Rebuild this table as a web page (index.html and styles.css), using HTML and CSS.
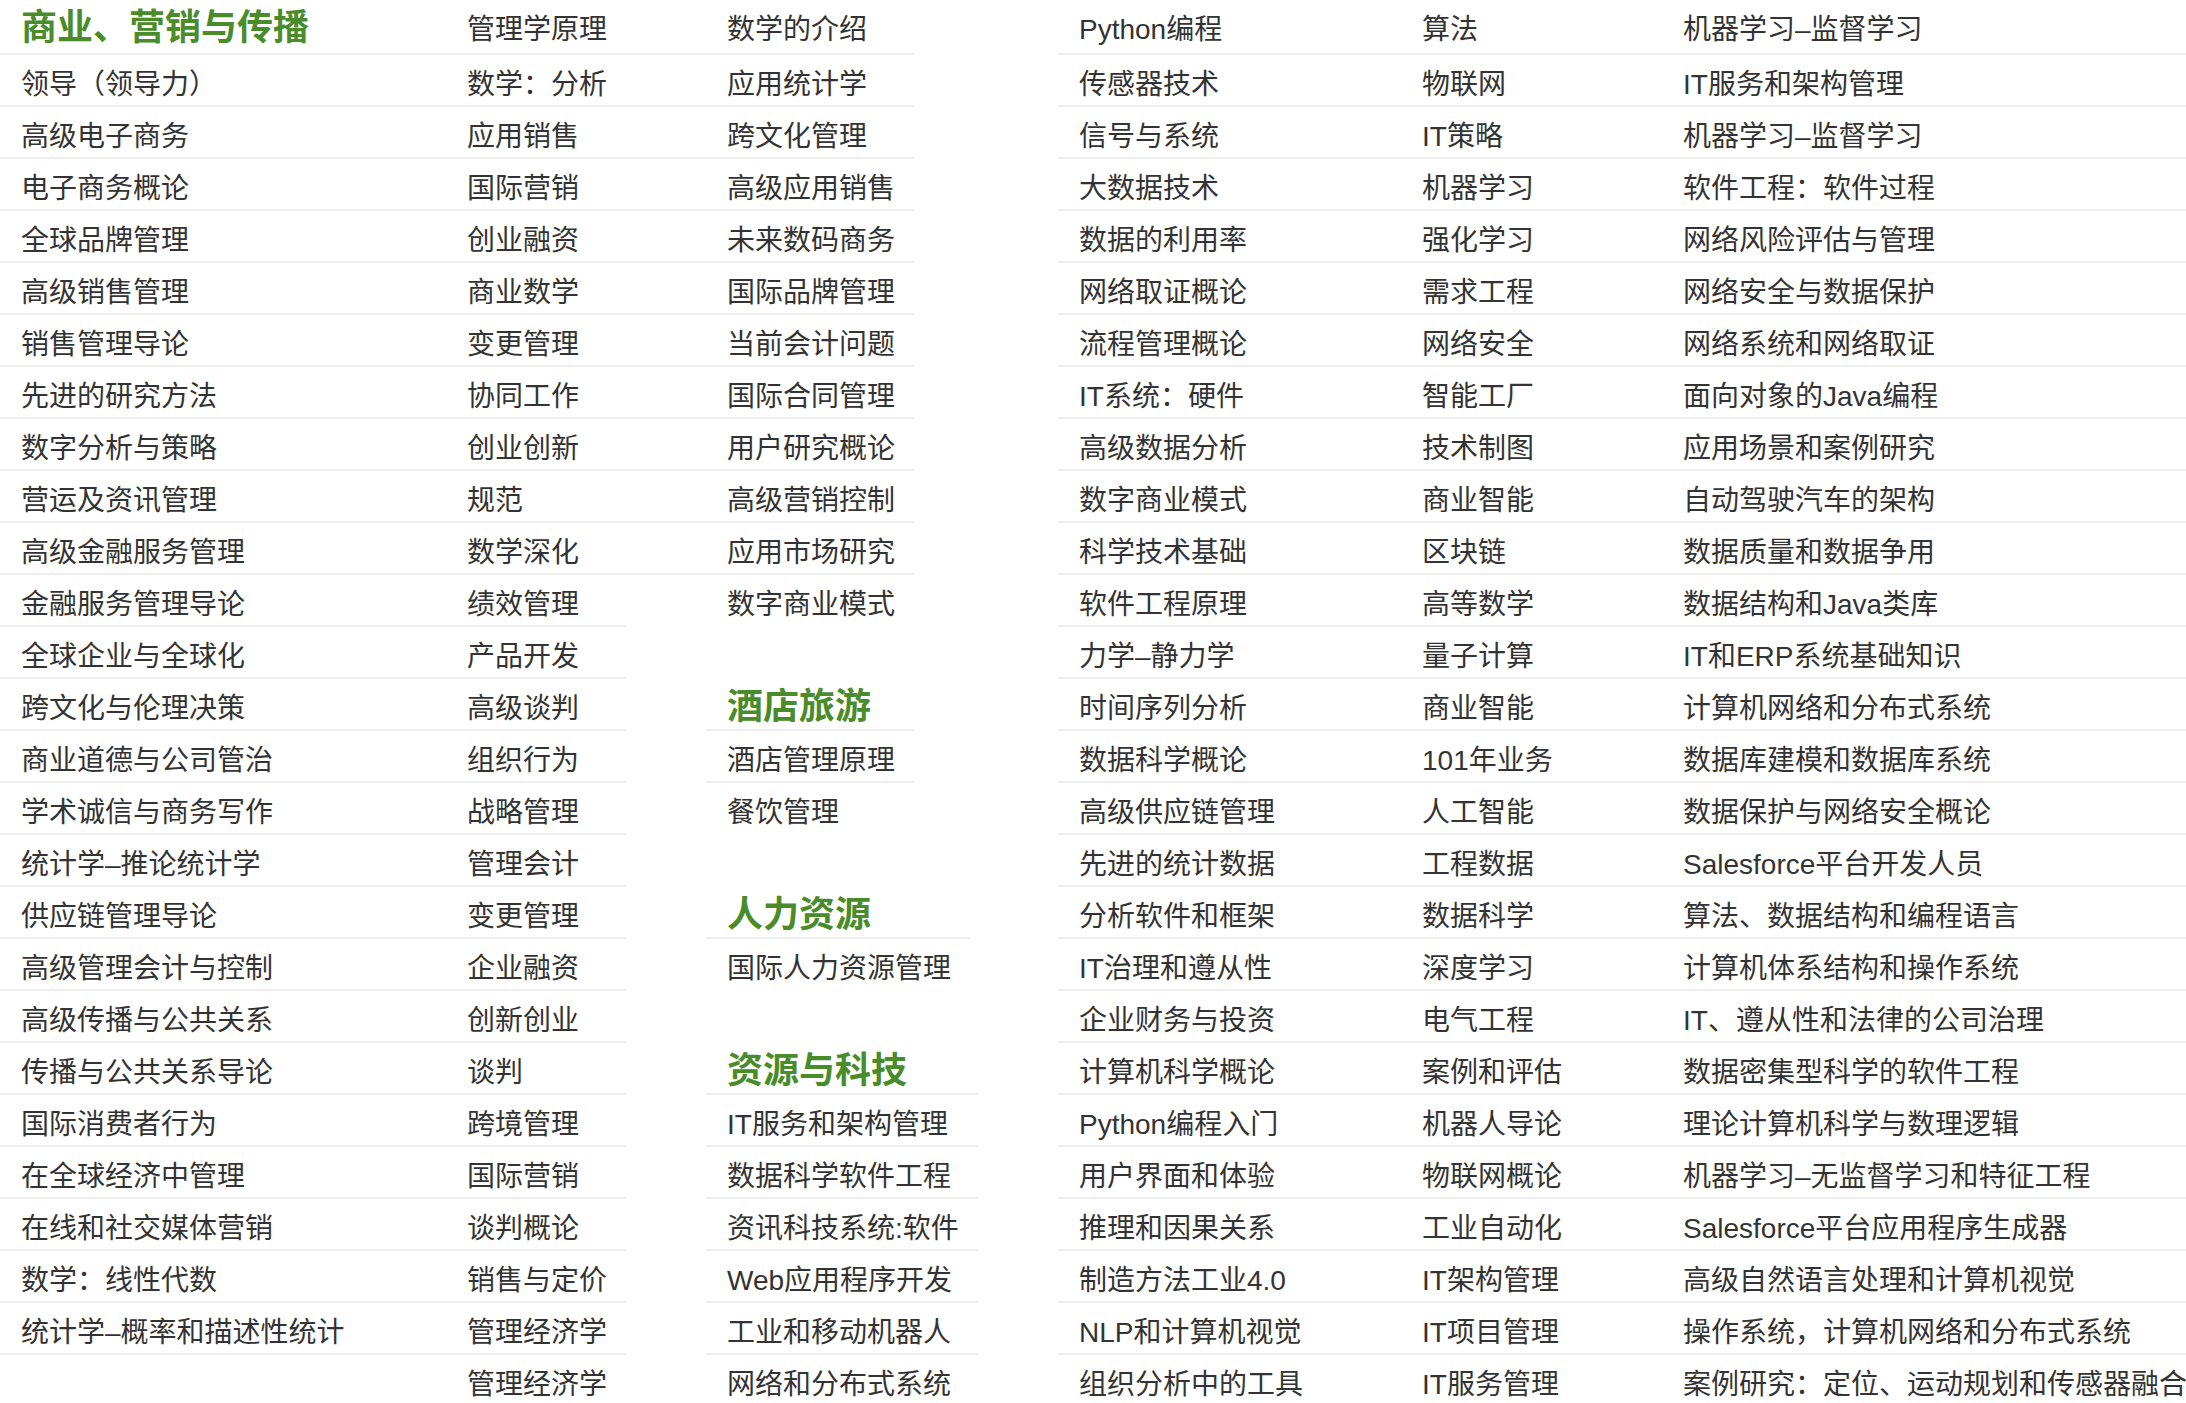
FILE: index.html
```html
<!DOCTYPE html>
<html lang="zh-CN">
<head>
<meta charset="utf-8">
<title>课程列表</title>
<link rel="stylesheet" href="styles.css">
</head>
<body>
<div class="page">
  <div class="left">
    <div class="grid2">
      <div class="c h">商业、营销与传播</div><div class="c">管理学原理</div>
      <div class="c">领导（领导力）</div><div class="c">数学：分析</div>
      <div class="c">高级电子商务</div><div class="c">应用销售</div>
      <div class="c">电子商务概论</div><div class="c">国际营销</div>
      <div class="c">全球品牌管理</div><div class="c">创业融资</div>
      <div class="c">高级销售管理</div><div class="c">商业数学</div>
      <div class="c">销售管理导论</div><div class="c">变更管理</div>
      <div class="c">先进的研究方法</div><div class="c">协同工作</div>
      <div class="c">数字分析与策略</div><div class="c">创业创新</div>
      <div class="c">营运及资讯管理</div><div class="c">规范</div>
      <div class="c">高级金融服务管理</div><div class="c">数学深化</div>
      <div class="c">金融服务管理导论</div><div class="c">绩效管理</div>
      <div class="c">全球企业与全球化</div><div class="c">产品开发</div>
      <div class="c">跨文化与伦理决策</div><div class="c">高级谈判</div>
      <div class="c">商业道德与公司管治</div><div class="c">组织行为</div>
      <div class="c">学术诚信与商务写作</div><div class="c">战略管理</div>
      <div class="c">统计学–推论统计学</div><div class="c">管理会计</div>
      <div class="c">供应链管理导论</div><div class="c">变更管理</div>
      <div class="c">高级管理会计与控制</div><div class="c">企业融资</div>
      <div class="c">高级传播与公共关系</div><div class="c">创新创业</div>
      <div class="c">传播与公共关系导论</div><div class="c">谈判</div>
      <div class="c">国际消费者行为</div><div class="c">跨境管理</div>
      <div class="c">在全球经济中管理</div><div class="c">国际营销</div>
      <div class="c">在线和社交媒体营销</div><div class="c">谈判概论</div>
      <div class="c">数学：线性代数</div><div class="c">销售与定价</div>
      <div class="c">统计学–概率和描述性统计</div><div class="c">管理经济学</div>
      <div class="c"></div><div class="c">管理经济学</div>
    </div>
    <div class="col3">
      <div class="list upper">
        <div class="c">数学的介绍</div>
        <div class="c">应用统计学</div>
        <div class="c">跨文化管理</div>
        <div class="c">高级应用销售</div>
        <div class="c">未来数码商务</div>
        <div class="c">国际品牌管理</div>
        <div class="c">当前会计问题</div>
        <div class="c">国际合同管理</div>
        <div class="c">用户研究概论</div>
        <div class="c">高级营销控制</div>
        <div class="c">应用市场研究</div>
        <div class="c">数字商业模式</div>
      </div>
      <div class="list section">
        <div class="c h">酒店旅游</div>
        <div class="c">酒店管理原理</div>
        <div class="c">餐饮管理</div>
      </div>
      <div class="list section">
        <div class="c h">人力资源</div>
        <div class="c">国际人力资源管理</div>
      </div>
      <div class="list section">
        <div class="c h">资源与科技</div>
        <div class="c">IT服务和架构管理</div>
        <div class="c">数据科学软件工程</div>
        <div class="c">资讯科技系统:软件</div>
        <div class="c">Web应用程序开发</div>
        <div class="c">工业和移动机器人</div>
        <div class="c">网络和分布式系统</div>
      </div>
    </div>
  </div>
  <div class="grid3">
    <div class="c">Python编程</div><div class="c">算法</div><div class="c">机器学习–监督学习</div>
    <div class="c">传感器技术</div><div class="c">物联网</div><div class="c">IT服务和架构管理</div>
    <div class="c">信号与系统</div><div class="c">IT策略</div><div class="c">机器学习–监督学习</div>
    <div class="c">大数据技术</div><div class="c">机器学习</div><div class="c">软件工程：软件过程</div>
    <div class="c">数据的利用率</div><div class="c">强化学习</div><div class="c">网络风险评估与管理</div>
    <div class="c">网络取证概论</div><div class="c">需求工程</div><div class="c">网络安全与数据保护</div>
    <div class="c">流程管理概论</div><div class="c">网络安全</div><div class="c">网络系统和网络取证</div>
    <div class="c">IT系统：硬件</div><div class="c">智能工厂</div><div class="c">面向对象的Java编程</div>
    <div class="c">高级数据分析</div><div class="c">技术制图</div><div class="c">应用场景和案例研究</div>
    <div class="c">数字商业模式</div><div class="c">商业智能</div><div class="c">自动驾驶汽车的架构</div>
    <div class="c">科学技术基础</div><div class="c">区块链</div><div class="c">数据质量和数据争用</div>
    <div class="c">软件工程原理</div><div class="c">高等数学</div><div class="c">数据结构和Java类库</div>
    <div class="c">力学–静力学</div><div class="c">量子计算</div><div class="c">IT和ERP系统基础知识</div>
    <div class="c">时间序列分析</div><div class="c">商业智能</div><div class="c">计算机网络和分布式系统</div>
    <div class="c">数据科学概论</div><div class="c">101年业务</div><div class="c">数据库建模和数据库系统</div>
    <div class="c">高级供应链管理</div><div class="c">人工智能</div><div class="c">数据保护与网络安全概论</div>
    <div class="c">先进的统计数据</div><div class="c">工程数据</div><div class="c">Salesforce平台开发人员</div>
    <div class="c">分析软件和框架</div><div class="c">数据科学</div><div class="c">算法、数据结构和编程语言</div>
    <div class="c">IT治理和遵从性</div><div class="c">深度学习</div><div class="c">计算机体系结构和操作系统</div>
    <div class="c">企业财务与投资</div><div class="c">电气工程</div><div class="c">IT、遵从性和法律的公司治理</div>
    <div class="c">计算机科学概论</div><div class="c">案例和评估</div><div class="c">数据密集型科学的软件工程</div>
    <div class="c">Python编程入门</div><div class="c">机器人导论</div><div class="c">理论计算机科学与数理逻辑</div>
    <div class="c">用户界面和体验</div><div class="c">物联网概论</div><div class="c">机器学习–无监督学习和特征工程</div>
    <div class="c">推理和因果关系</div><div class="c">工业自动化</div><div class="c">Salesforce平台应用程序生成器</div>
    <div class="c">制造方法工业4.0</div><div class="c">IT架构管理</div><div class="c">高级自然语言处理和计算机视觉</div>
    <div class="c">NLP和计算机视觉</div><div class="c">IT项目管理</div><div class="c">操作系统，计算机网络和分布式系统</div>
    <div class="c">组织分析中的工具</div><div class="c">IT服务管理</div><div class="c">案例研究：定位、运动规划和传感器融合</div>
  </div>
</div>
</body>
</html>
```

FILE: styles.css
```css
html, body {
  margin: 0;
  padding: 0;
  overflow: hidden;
  background: #ffffff;
}

body {
  font-family: "Liberation Sans", "Noto Sans CJK SC", sans-serif;
  font-size: 28px;
  color: #333333;
}

.page {
  display: flex;
  align-items: flex-start;
}

.left {
  display: flex;
  align-items: flex-start;
  width: 1058px;
  flex: none;
}

.c {
  box-sizing: border-box;
  height: 52px;
  padding: 9px 19px 0 21px;
  line-height: 41px;
  white-space: nowrap;
  border-bottom: 2px solid #eeeeee;
}

.h {
  font-size: 36px;
  font-weight: 700;
  color: #4a8c2a;
  padding-top: 6px;
  line-height: 44px;
}

/* left: columns 1 and 2 */
.grid2 {
  display: grid;
  grid-template-columns: 446px 180px;
  flex: none;
}
.grid2 > .c:nth-child(-n+2) { height: 55px; }
.grid2 > .c:nth-last-child(-n+2) { border-bottom-color: transparent; }

/* left: column 3 */
.col3 {
  display: flex;
  flex-direction: column;
  align-items: flex-start;
}

.list {
  display: flex;
  flex-direction: column;
  width: max-content;
}
.list > .c:last-child { border-bottom-color: transparent; }

.upper > .c { padding-left: 101px; }
.upper > .c:first-child { height: 55px; }

.section {
  margin-left: 80px;
  margin-top: 52px;
}

/* right: three columns */
.grid3 {
  display: grid;
  grid-template-columns: 343px 261px minmax(0, 1fr);
  flex: 1;
  min-width: 0;
}
.grid3 > .c { overflow: visible; }
.grid3 > .c:nth-child(-n+3) { height: 55px; }
.grid3 > .c:nth-last-child(-n+3) { border-bottom-color: transparent; }
```
